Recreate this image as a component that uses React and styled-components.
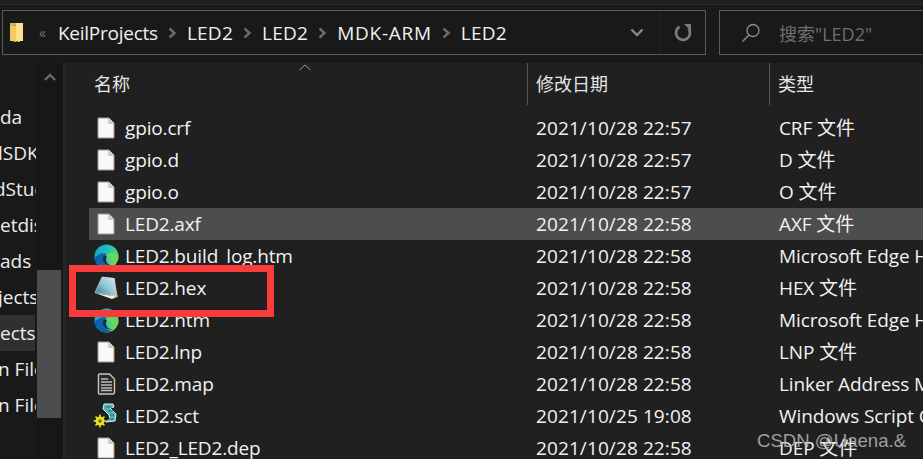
import React from 'react';
import styled, { createGlobalStyle } from 'styled-components';

const UI_FONT = '"Open Sans", "Noto Sans CJK SC", sans-serif';

const Global = createGlobalStyle`
  html, body { margin: 0; padding: 0; background: #191919; }
  body { font-family: ${UI_FONT}; overflow: hidden; }
`;

const Page = styled.div`
  position: relative;
  width: 923px;
  height: 459px;
  overflow: hidden;
  background: #191919;
  display: flex;
  flex-direction: column;
`;

const TitleEdge = styled.div`
  height: 4px;
  flex: none;
  background: #1f1f1f;
  border-bottom: 1px solid #2b2b2b;
`;

const TopBar = styled.div`
  height: 58px;
  flex: none;
  box-sizing: border-box;
  padding: 5px 0 8px 2px;
  display: flex;
  gap: 13px;
`;

const AddressBox = styled.div`
  width: 704px;
  box-sizing: border-box;
  border: 1px solid #5b5b5b;
  display: flex;
  align-items: center;
  color: #f0f0f0;
  font-size: 19px;
`;

const Crumbs = styled.div`
  flex: 1;
  display: flex;
  align-items: center;
  padding-left: 6px;
`;

const Overflow = styled.span`
  color: #777;
  font-size: 14px;
  margin: 0 12px 0 14px;
`;

const Crumb = styled.span`
  line-height: 24px;
  letter-spacing: ${({ $track }) => $track}px;
`;

const ChevronBox = styled.span`
  display: flex;
  width: 29px;
  justify-content: center;
`;

const EndButton = styled.div`
  width: ${({ $w }) => $w}px;
  align-self: stretch;
  display: flex;
  align-items: center;
  justify-content: center;
  border-left: ${({ $line }) => ($line ? '1px solid #242424' : '0')};
  box-sizing: border-box;
`;

const SearchBox = styled.div`
  flex: 1;
  box-sizing: border-box;
  border: 1px solid #5b5b5b;
  border-right: 0;
  display: flex;
  align-items: center;
  padding-left: 21px;
  gap: 18px;
  color: #6f6f6f;
  font-size: 18px;
`;

const Body = styled.div`
  flex: 1;
  display: flex;
  min-height: 0;
`;

const Nav = styled.div`
  width: 37px;
  flex: none;
  overflow: hidden;
  padding-top: 36px;
  color: #ececec;
  font-size: 19px;
`;

const NavItem = styled.div`
  height: 36px;
  line-height: 36px;
  white-space: nowrap;
  width: 36px;
  overflow: hidden;
  background: ${({ $active }) => ($active ? 'linear-gradient(90deg, #303030 35px, #191919 35px)' : 'transparent')};
  text-indent: ${({ $shift }) => $shift || 0}px;
`;

const Track = styled.div`
  width: 26px;
  flex: none;
  background: #171717;
  position: relative;
  display: flex;
  flex-direction: column;
  align-items: center;
  padding-top: 10px;
  padding-right: 1px;
  box-sizing: border-box;
`;

const Thumb = styled.div`
  position: absolute;
  left: 0;
  top: 207px;
  width: 24px;
  height: 148px;
  background: #4d4d4d;
`;

const Pane = styled.div`
  flex: 1;
  background: #202020;
  border-left: 3px solid #262626;
  min-width: 0;
  overflow: hidden;
`;

const Header = styled.div`
  height: 40px;
  display: grid;
  grid-template-columns: 461px 242px 1fr;
  position: relative;
  color: #e6e6e6;
  font-size: 18px;
`;

const HeaderCell = styled.div`
  padding-left: ${({ $first }) => ($first ? 28 : 8)}px;
  border-left: ${({ $first }) => ($first ? '0' : '1px solid #555')};
  line-height: 42px;
`;

const SortArrow = styled.svg`
  position: absolute;
  left: 233px;
  top: 1px;
`;

const List = styled.div`
  padding: 9px 0 0 23px;
`;

const Row = styled.div`
  display: grid;
  grid-template-columns: 447px 243px 1fr;
  height: 32px;
  line-height: 32px;
  color: #f2f2f2;
  font-size: 19px;
  white-space: nowrap;
  background: ${({ $selected }) => ($selected ? '#4d4d4d' : 'transparent')};
`;

const NameCell = styled.div`
  display: flex;
  align-items: center;
  padding-left: 4px;
  gap: 6px;
  letter-spacing: -0.15px;
`;

const DateCell = styled.div`
  letter-spacing: 0.1px;
`;

const TypeCell = styled.div`
  letter-spacing: -0.1px;
`;

const IconSlot = styled.span`
  width: 26px;
  height: 26px;
  flex: none;
  display: flex;
  align-items: center;
  justify-content: center;
`;

const HexMark = styled.div`
  position: absolute;
  left: 69px;
  top: 265px;
  width: 205px;
  height: 52px;
  box-sizing: border-box;
  border: 7px solid #fa3b3b;
`;

const Watermark = styled.div`
  position: absolute;
  left: 757px;
  top: 428px;
  color: #b4b4b4;
  opacity: 0.85;
  font-family: "Liberation Sans", sans-serif;
  font-size: 18.6px;
  line-height: 26px;
  white-space: nowrap;
`;

const FolderIcon = () => (
  <svg width="16" height="21" viewBox="0 0 16 21">
    <path d="M1 1h10v19l-4-.5V3.5L1 3z" fill="#d9b453" />
    <path d="M1 3l6 .5V20L3 19H1z" fill="#f0ca62" />
    <rect x="7" y="1" width="7" height="18" fill="#fce08a" />
  </svg>
);

const Chevron = () => (
  <svg width="9" height="12" viewBox="0 0 9 12">
    <path d="M1.500 1.500 6.500 6l-5 4.500" fill="none" stroke="#6c6c6c" strokeWidth="2.400" />
  </svg>
);

const FileIcon = () => (
  <svg width="18" height="22" viewBox="0 0 18 22">
    <path d="M1 1h11l5 5v15H1z" fill="#f8f8f8" stroke="#9a9a9a" strokeWidth="1" />
    <path d="M12 1v5h5" fill="#d8d8d8" stroke="#a8a8a8" strokeWidth="1" />
  </svg>
);

const MapIcon = () => (
  <svg width="19" height="22" viewBox="0 0 19 22">
    <path d="M2.500 1h10l5 5v13a2 2 0 0 1-2 2h-13a1 1 0 0 1-1-1V2a1 1 0 0 1 1-1z" fill="#2a2a2a" stroke="#c4c4c4" strokeWidth="1.400" />
    <path d="M4 6h7M4 9h11M4 12h11M4 15h11M4 17.500h11" stroke="#bdbdbd" strokeWidth="1.400" />
  </svg>
);

const EdgeIcon = () => (
  <svg width="25" height="25" viewBox="0 0 25 25">
    <defs>
      <linearGradient id="edgeTop" x1="0" y1="0" x2="1" y2="0.6">
        <stop offset="0" stopColor="#0f9bd7" />
        <stop offset="0.6" stopColor="#2cc6b4" />
        <stop offset="1" stopColor="#6fdc5c" />
      </linearGradient>
    </defs>
    <circle cx="12.500" cy="12.500" r="12" fill="url(#edgeTop)" />
    <path d="M.5 12.500C.5 20 6 24.500 12.500 24.500c3 0 5.500-.7 7.500-2-4 1-8.500-.5-9.500-4.500-.8-3 1-6 3.800-6.500-2.300-2.500-7-3-9.800-.5C2.500 12 1.500 12.500.5 12.500z" fill="#0c63ad" />
    <path d="M11 14c0-3 2.500-5 6-5 4 0 7.500 2 7.500 5.500 0 2-2 3-4 3-2.500 0-4-1-3.500-2.500-1.500-2.500-5-2.500-6-1z" fill="#65d95a" />
    <path d="M9 13.500c-.5 4.500 3 8 7 8 1 0 2-.2 3-.6-3 .6-6.500-1-7-5-.2-1.500.2-3 1-4-2-.5-3.500.2-4 1.600z" fill="#1c2b3a" />
  </svg>
);

const HexIcon = () => (
  <svg width="25" height="24" viewBox="0 0 25 24">
    <defs>
      <linearGradient id="hexFace" x1="0" y1="1" x2="1" y2="0">
        <stop offset="0" stopColor="#2a7488" />
        <stop offset="0.5" stopColor="#8fc6d2" />
        <stop offset="1" stopColor="#dcedf1" />
      </linearGradient>
    </defs>
    <path d="M8 1 20 2l4 19-6 2z" fill="#b8a272" />
    <path d="M8 1 20.500 2.500 22 20 1 16.500z" fill="url(#hexFace)" stroke="#e6e6e6" strokeWidth="0.600" />
    <path d="M1 17l21 3.500-4 2.500z" fill="#f0f0f0" />
  </svg>
);

const ScriptIcon = () => (
  <svg width="26" height="26" viewBox="0 0 26 26">
    <path d="M11 1h9l1 3-4 1 6 6-1 7-9 1 4-3-1-4-6-6z" fill="#4fb6b8" stroke="#d8eeee" strokeWidth="1" />
    <path d="M13 4h6M15 8h5M17 12h4M16 16h5" stroke="#1f6d70" strokeWidth="1.200" />
    <circle cx="7" cy="18" r="4.500" fill="#e9e21d" />
    <path d="M7 11.500v13M.5 18h13M2.500 13.500l9 9M11.500 13.500l-9 9" stroke="#e9e21d" strokeWidth="1.600" />
    <path d="M5 18h4M7 16v4" stroke="#444" strokeWidth="1" />
  </svg>
);

const ICONS = { file: FileIcon, map: MapIcon, edge: EdgeIcon, hex: HexIcon, script: ScriptIcon };

const FILES = [
  { name: 'gpio.crf', date: '2021/10/28 22:57', type: 'CRF 文件', icon: 'file' },
  { name: 'gpio.d', date: '2021/10/28 22:57', type: 'D 文件', icon: 'file' },
  { name: 'gpio.o', date: '2021/10/28 22:57', type: 'O 文件', icon: 'file' },
  { name: 'LED2.axf', date: '2021/10/28 22:58', type: 'AXF 文件', icon: 'file', selected: true },
  { name: 'LED2.build_log.htm', date: '2021/10/28 22:58', type: 'Microsoft Edge HTML Document', icon: 'edge' },
  { name: 'LED2.hex', date: '2021/10/28 22:58', type: 'HEX 文件', icon: 'hex' },
  { name: 'LED2.htm', date: '2021/10/28 22:58', type: 'Microsoft Edge HTML Document', icon: 'edge' },
  { name: 'LED2.lnp', date: '2021/10/28 22:58', type: 'LNP 文件', icon: 'file' },
  { name: 'LED2.map', date: '2021/10/28 22:58', type: 'Linker Address Map', icon: 'map' },
  { name: 'LED2.sct', date: '2021/10/25 19:08', type: 'Windows Script Component', icon: 'script' },
  { name: 'LED2_LED2.dep', date: '2021/10/28 22:58', type: 'DEP 文件', icon: 'file' },
];

const NAV = [
  { text: 'da' },
  { text: 'lSDK', shift: -2 },
  { text: 'dStudio', shift: -6 },
  { text: 'etdisk' },
  { text: 'ads' },
  { text: 'jects', shift: -2 },
  { text: 'ects', active: true },
  { text: 'n Files', shift: -2 },
  { text: 'n Files', shift: -2 },
];

const CRUMBS = [
  { text: 'KeilProjects', track: -0.25 },
  { text: 'LED2', track: 0.25 },
  { text: 'LED2', track: 0.25 },
  { text: 'MDK-ARM', track: 0.75 },
  { text: 'LED2', track: 0.25 },
];

export default function App() {
  return (
    <Page>
      <Global />
      <TitleEdge />
      <TopBar>
        <AddressBox>
          <Crumbs>
            <FolderIcon />
            <Overflow>«</Overflow>
            {CRUMBS.map((c, i) => (
              <React.Fragment key={i}>
                {i > 0 && <ChevronBox><Chevron /></ChevronBox>}
                <Crumb $track={c.track}>{c.text}</Crumb>
              </React.Fragment>
            ))}
          </Crumbs>
          <EndButton $w={45}>
            <svg width="14" height="9" viewBox="0 0 14 9">
              <path d="M1.500 1.500 7 7l5.500-5.500" fill="none" stroke="#8a8a8a" strokeWidth="2.400" />
            </svg>
          </EndButton>
          <EndButton $w={46} $line>
            <svg width="18" height="18" viewBox="0 0 18 18">
              <path d="M14.500 4.500A7 7 0 1 1 5.500 2.800" fill="none" stroke="#7b7b7b" strokeWidth="2.800" />
              <path d="M10 0h7v7z" fill="#7b7b7b" />
            </svg>
          </EndButton>
        </AddressBox>
        <SearchBox>
          <svg width="20" height="20" viewBox="0 0 20 20">
            <circle cx="12" cy="7.500" r="6" fill="none" stroke="#8c8c8c" strokeWidth="1.300" />
            <path d="M8 12 1.500 18.500" stroke="#8c8c8c" strokeWidth="1.500" />
          </svg>
          <span>搜索"LED2"</span>
        </SearchBox>
      </TopBar>
      <Body>
        <Nav>
          {NAV.map((n, i) => (
            <NavItem key={i} $active={n.active} $shift={n.shift}>{n.text}</NavItem>
          ))}
        </Nav>
        <Track>
          <svg width="12" height="8" viewBox="0 0 12 8">
            <path d="M1 7l5-5 5 5" fill="none" stroke="#6a6a6a" strokeWidth="2.400" />
          </svg>
          <Thumb />
        </Track>
        <Pane>
          <Header>
            <HeaderCell $first>名称</HeaderCell>
            <HeaderCell>修改日期</HeaderCell>
            <HeaderCell>类型</HeaderCell>
            <SortArrow width="12" height="7" viewBox="0 0 12 7">
              <path d="M.5 6 6 1l5.500 5" fill="none" stroke="#9a9a9a" strokeWidth="1" />
            </SortArrow>
          </Header>
          <List>
            {FILES.map((f) => {
              const Icon = ICONS[f.icon];
              return (
                <Row key={f.name} $selected={f.selected}>
                  <NameCell>
                    <IconSlot><Icon /></IconSlot>
                    <span>{f.name}</span>
                  </NameCell>
                  <DateCell>{f.date}</DateCell>
                  <TypeCell>{f.type}</TypeCell>
                </Row>
              );
            })}
          </List>
        </Pane>
      </Body>
      <HexMark />
      <Watermark>CSDN @Uaena.&amp;</Watermark>
    </Page>
  );
}
